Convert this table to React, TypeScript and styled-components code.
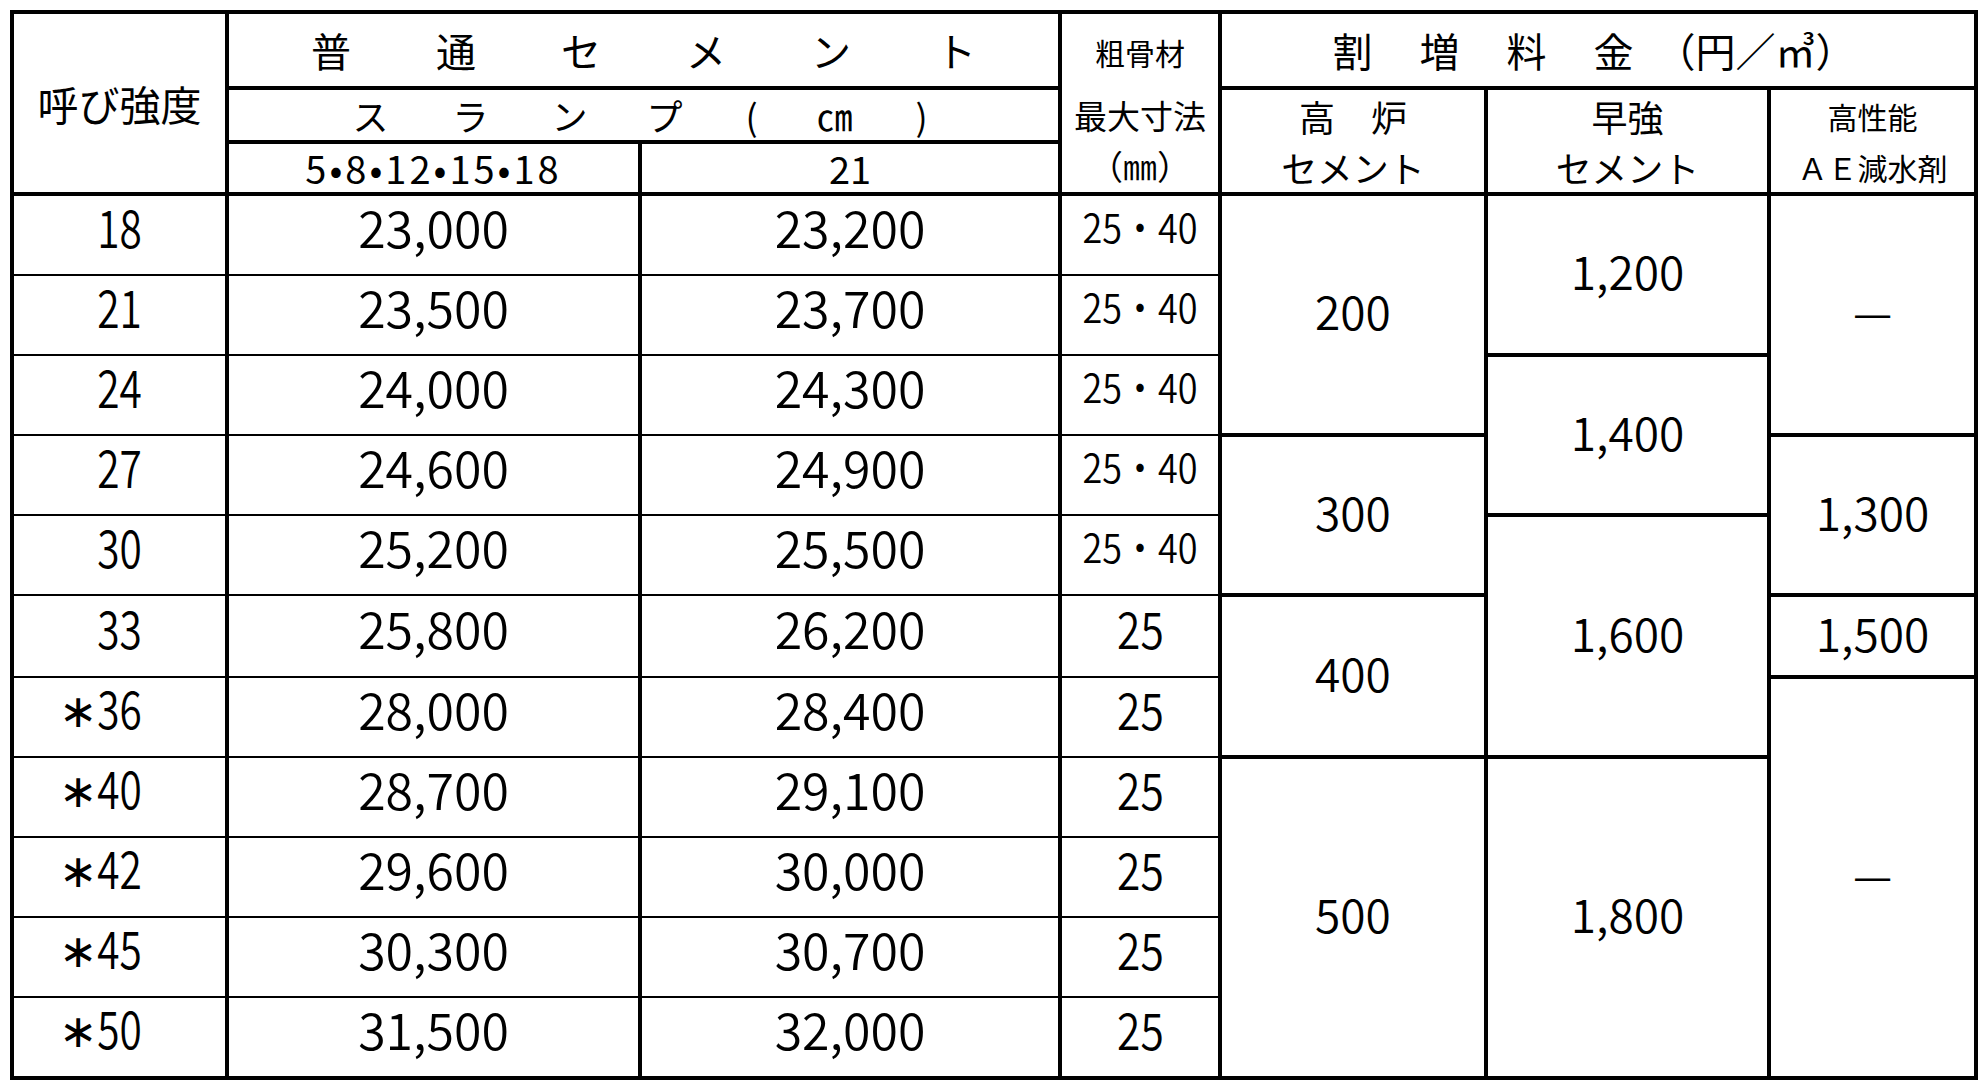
import React from 'react'
import styled, { createGlobalStyle } from 'styled-components'

const GlobalStyle = createGlobalStyle`
  html, body {
    margin: 0;
    padding: 0;
    background: #fff;
  }
  body {
    font-family: "Noto Sans CJK JP", "Noto Sans", sans-serif;
    color: #000;
  }
`

const Page = styled.div`
  padding: 10px 0 0 10px;
`

const Table = styled.table`
  border-collapse: collapse;
  table-layout: fixed;
  width: 1964px;
  border: 4px solid #000;
`

const HeadCell = styled.th<{ $size?: number; $h?: number }>`
  border: 4px solid #000;
  padding: 0;
  font-weight: 400;
  text-align: center;
  vertical-align: middle;
  font-size: ${p => p.$size ?? 40}px;
  line-height: 1;
  height: ${p => (p.$h ? `${p.$h}px` : 'auto')};
`

const Cell = styled.td<{ $size?: number; $thick?: boolean }>`
  border-left: 4px solid #000;
  border-right: 4px solid #000;
  border-top: ${p => (p.$thick ? 4 : 2)}px solid #000;
  border-bottom: ${p => (p.$thick ? 4 : 2)}px solid #000;
  padding: 0 0 ${p => (p.$thick ? 9 : 19)}px;
  height: ${p => (p.$thick ? 69 : 59)}px;
  text-align: center;
  vertical-align: middle;
  font-size: ${p => p.$size ?? 50}px;
  font-weight: 350;
  line-height: 1;
`

const Spread = styled.div<{ $gap: number }>`
  display: flex;
  justify-content: center;
  align-items: center;
  gap: ${p => p.$gap}px;
`

const Slot = styled.span<{ $w: number }>`
  display: inline-block;
  width: ${p => p.$w}px;
  text-align: center;
`

const Stack = styled.div`
  display: flex;
  flex-direction: column;
`

const Line = styled.div<{ $h: number; $size: number }>`
  height: ${p => p.$h}px;
  display: flex;
  align-items: center;
  justify-content: center;
  font-size: ${p => p.$size}px;
  white-space: nowrap;
`

const Narrow = styled.span<{ $x?: number }>`
  display: inline-block;
  transform: scaleX(${p => p.$x ?? 0.8});
  white-space: nowrap;
`

const Mark = styled.span`
  display: inline-block;
  width: 32px;
  margin-left: -32px;
  font-family: "DejaVu Sans", sans-serif;
  font-size: 46px;
  font-weight: 400;
  text-align: left;
  vertical-align: 2px;
`

const Sizes = styled.span`
  letter-spacing: 3px;
`

type Row = { grade: string; star?: boolean; a: string; b: string; agg: string }

const rows: Row[] = [
  { grade: '18', a: '23,000', b: '23,200', agg: '25・40' },
  { grade: '21', a: '23,500', b: '23,700', agg: '25・40' },
  { grade: '24', a: '24,000', b: '24,300', agg: '25・40' },
  { grade: '27', a: '24,600', b: '24,900', agg: '25・40' },
  { grade: '30', a: '25,200', b: '25,500', agg: '25・40' },
  { grade: '33', a: '25,800', b: '26,200', agg: '25' },
  { grade: '36', star: true, a: '28,000', b: '28,400', agg: '25' },
  { grade: '40', star: true, a: '28,700', b: '29,100', agg: '25' },
  { grade: '42', star: true, a: '29,600', b: '30,000', agg: '25' },
  { grade: '45', star: true, a: '30,300', b: '30,700', agg: '25' },
  { grade: '50', star: true, a: '31,500', b: '32,000', agg: '25' },
]

// surcharge cells, in column order, keyed by the row they start on
const extras: Record<number, { text: string; span: number }[]> = {
  0: [{ text: '200', span: 3 }, { text: '1,200', span: 2 }, { text: '—', span: 3 }],
  2: [{ text: '1,400', span: 2 }],
  3: [{ text: '300', span: 2 }, { text: '1,300', span: 2 }],
  4: [{ text: '1,600', span: 3 }],
  5: [{ text: '400', span: 2 }, { text: '1,500', span: 1 }],
  6: [{ text: '—', span: 5 }],
  7: [{ text: '500', span: 4 }, { text: '1,800', span: 4 }],
}

const widths = [215, 413, 420, 160, 266, 283, 207]

export default function App() {
  return (
    <>
      <GlobalStyle />
      <Page>
        <Table>
          <colgroup>
            {widths.map((w, i) => (
              <col key={i} style={{ width: w }} />
            ))}
          </colgroup>
          <thead>
            <tr>
              <HeadCell rowSpan={3} $size={41}>呼び強度</HeadCell>
              <HeadCell colSpan={2} $h={72} $size={40}>
                <Spread $gap={85}>
                  {['普', '通', 'セ', 'メ', 'ン', 'ト'].map(c => (
                    <span key={c}>{c}</span>
                  ))}
                </Spread>
              </HeadCell>
              <HeadCell rowSpan={3}>
                <Stack>
                  <Line $h={74} $size={30}>粗骨材</Line>
                  <Line $h={52} $size={33}>最大寸法</Line>
                  <Line $h={50} $size={34}>（㎜）</Line>
                </Stack>
              </HeadCell>
              <HeadCell colSpan={3} $size={40}>
                <Spread $gap={0} style={{ paddingRight: 8 }}>
                  <Spread $gap={47}>
                    {['割', '増', '料', '金'].map(c => (
                      <span key={c}>{c}</span>
                    ))}
                  </Spread>
                  <span style={{ marginLeft: 22 }}>（円／㎥）</span>
                </Spread>
              </HeadCell>
            </tr>
            <tr>
              <HeadCell colSpan={2} $h={48} $size={36}>
                <Spread $gap={0}>
                  <Slot $w={100}>ス</Slot>
                  <Slot $w={100}>ラ</Slot>
                  <Slot $w={98}>ン</Slot>
                  <Slot $w={92}>プ</Slot>
                  <Slot $w={82}>(</Slot>
                  <Slot $w={84}>㎝</Slot>
                  <Slot $w={90}>)</Slot>
                </Spread>
              </HeadCell>
              <HeadCell rowSpan={2}>
                <Stack>
                  <Line $h={52} $size={36}>高　炉</Line>
                  <Line $h={50} $size={36}>セメント</Line>
                </Stack>
              </HeadCell>
              <HeadCell rowSpan={2}>
                <Stack>
                  <Line $h={52} $size={36}>早強</Line>
                  <Line $h={50} $size={36}>セメント</Line>
                </Stack>
              </HeadCell>
              <HeadCell rowSpan={2}>
                <Stack>
                  <Line $h={52} $size={30}>高性能</Line>
                  <Line $h={50} $size={30}>ＡＥ減水剤</Line>
                </Stack>
              </HeadCell>
            </tr>
            <tr>
              <HeadCell $h={47} $size={38}>
                <Sizes>5•8•12•15•18</Sizes>
              </HeadCell>
              <HeadCell $h={47} $size={38}>21</HeadCell>
            </tr>
          </thead>
          <tbody>
            {rows.map((r, i) => (
              <tr key={r.grade}>
                <Cell $size={52}>
                  {r.star && <Mark>∗</Mark>}
                  <Narrow $x={0.78}>{r.grade}</Narrow>
                </Cell>
                <Cell>{r.a}</Cell>
                <Cell>{r.b}</Cell>
                {r.agg === '25' ? (
                  <Cell $size={50}>
                    <Narrow $x={0.85}>25</Narrow>
                  </Cell>
                ) : (
                  <Cell $size={40}>
                    <Narrow $x={0.9}>{r.agg}</Narrow>
                  </Cell>
                )}
                {(extras[i] || []).map((e, j) => (
                  <Cell key={j} rowSpan={e.span} $thick $size={e.text === '—' ? 44 : 46}>
                    {e.text}
                  </Cell>
                ))}
              </tr>
            ))}
          </tbody>
        </Table>
      </Page>
    </>
  )
}
